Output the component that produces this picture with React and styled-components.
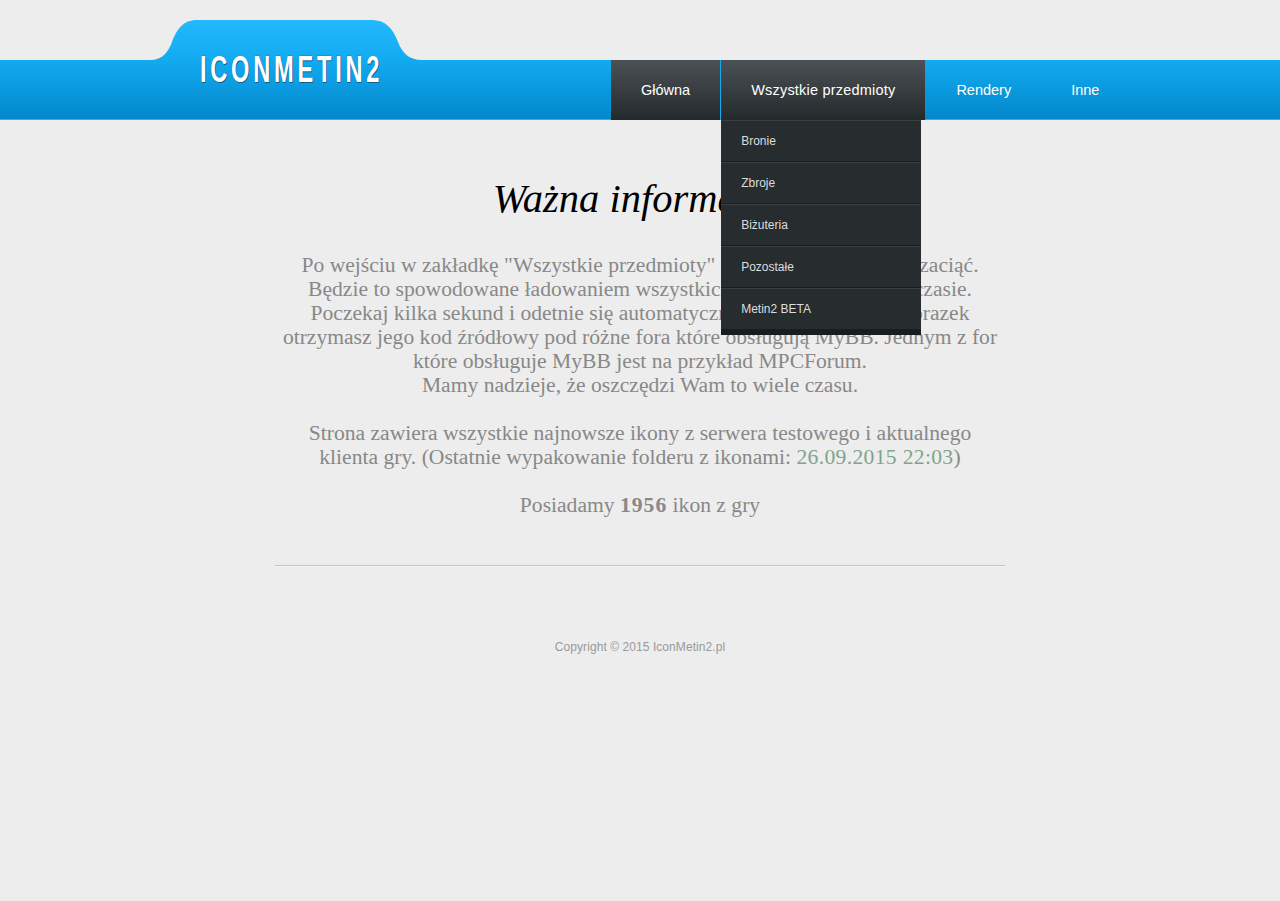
import React from "react";
import styled, { createGlobalStyle } from "styled-components";

const Global = createGlobalStyle`
  html, body { margin: 0; padding: 0; background: #ededed; }
  body { min-height: 901px; font-family: "Liberation Sans", Arial, sans-serif; }
`;

const Header = styled.header`
  position: relative;
  margin-top: 60px;
  height: 60px;
  box-sizing: border-box;
  border-bottom: 1px solid #2fb0ee;
  background: linear-gradient(#12aaf0, #0388cc);
`;

const LogoTab = styled.svg`
  position: absolute;
  left: 150px;
  top: -40px;
  width: 272px;
  height: 40px;
  display: block;
`;

const Logo = styled.a`
  position: absolute;
  left: 200px;
  top: -10px;
  font-family: "Liberation Sans", sans-serif;
  font-weight: 700;
  font-size: 37px;
  line-height: 40px;
  letter-spacing: 5.8px;
  color: #fff;
  white-space: nowrap;
  transform: scaleX(0.64);
  transform-origin: left center;
  -webkit-text-stroke: 0.5px #0a5f8c;
  paint-order: stroke fill;
  text-shadow: 1px 1px 0 #0a5f8c;
`;

const Nav = styled.nav`
  position: absolute;
  left: 611px;
  top: 0;
  display: flex;
  height: 60px;
`;

const NavItem = styled.div`
  position: relative;
  height: 60px;
  box-sizing: border-box;
  padding: 0 30px 0 ${(p) => p.$padLeft || 30}px;
  font-size: 14.5px;
  letter-spacing: ${(p) => p.$track || 0}px;
  line-height: 60px;
  color: #fff;
  white-space: nowrap;
  background: ${(p) => (p.$active ? "linear-gradient(#4b5154, #24292c)" : "transparent")};
  border-left: ${(p) => (p.$divider ? "1px solid #12aaf0" : "none")};
`;

const Dropdown = styled.ul`
  position: absolute;
  left: 0;
  top: 60px;
  width: 200px;
  margin: 0;
  padding: 0 0 5px;
  list-style: none;
  letter-spacing: 0;
  background: #1a1d1f;
  z-index: 2;
`;

const DropItem = styled.li`
  height: 42px;
  box-sizing: border-box;
  padding-left: 20px;
  font-size: 12px;
  line-height: 41px;
  color: #ddd;
  background: #272c2f;
  border-top: 1px solid #3b4043;
  border-bottom: 1px solid #1a1d1f;
`;

const Main = styled.main`
  width: 730px;
  margin: 0 auto;
  text-align: center;
  font-family: "Liberation Serif", Georgia, serif;
`;

const Title = styled.h1`
  margin: 56px 0 0;
  font-size: 40.5px;
  line-height: 46px;
  font-weight: 400;
  font-style: italic;
  color: #000;
`;

const Info = styled.p`
  margin: 0;
  padding-top: 31px;
  font-size: 21.6px;
  line-height: 24px;
  color: #888;
`;

const Accent = styled.span`
  color: #7fa48a;
  letter-spacing: 0.33px;
`;

const Count = styled.b`
  font-weight: 700;
  letter-spacing: 1px;
`;

const Rule = styled.hr`
  margin: 48px 0 0;
  border: 0;
  border-top: 1px solid #c4c4c4;
  border-bottom: 1px solid #f6f6f6;
`;

const Footer = styled.footer`
  margin-top: 72px;
  text-align: center;
  font-family: "Liberation Sans", Arial, sans-serif;
  font-size: 12px;
  letter-spacing: 0.07px;
  line-height: 16px;
  color: #999;
`;

const menu = ["Bronie", "Zbroje", "Biżuteria", "Pozostałe", "Metin2 BETA"];

export default function App() {
  return (
    <>
      <Global />
      <Header>
        <LogoTab viewBox="0 0 272 40">
          <defs>
            <linearGradient id="tab" x1="0" y1="0" x2="0" y2="1">
              <stop offset="0" stopColor="#23b9ff" />
              <stop offset="1" stopColor="#12aaf0" />
            </linearGradient>
          </defs>
          <path
            d="M0 40 C13 40 18 32 22 22 C27 9 33 0 47 0 L222 0 C236 0 243 9 248 22 C252 32 258 40 272 40 Z"
            fill="url(#tab)"
          />
        </LogoTab>
        <Logo>ICONMETIN2</Logo>
        <Nav>
          <NavItem $active>Główna</NavItem>
          <NavItem $active $divider $track={0.2}>
            Wszystkie przedmioty
            <Dropdown>
              {menu.map((m) => (
                <DropItem key={m}>{m}</DropItem>
              ))}
            </Dropdown>
          </NavItem>
          <NavItem $padLeft={31}>Rendery</NavItem>
          <NavItem>Inne</NavItem>
        </Nav>
      </Header>
      <Main>
        <Title>Ważna informacja</Title>
        <Info>
          Po wejściu w zakładkę "Wszystkie przedmioty" przeglądarka może się zaciąć.
          <br />
          Będzie to spowodowane ładowaniem wszystkich ikon, w tym samym czasie.
          <br />
          Poczekaj kilka sekund i odetnie się automatycznie. Po kliknięciu na obrazek
          <br />
          otrzymasz jego kod źródłowy pod różne fora które obsługują MyBB. Jednym z for
          <br />
          które obsługuje MyBB jest na przykład MPCForum.
          <br />
          Mamy nadzieje, że oszczędzi Wam to wiele czasu.
          <br />
          <br />
          Strona zawiera wszystkie najnowsze ikony z serwera testowego i aktualnego
          <br />
          klienta gry. (Ostatnie wypakowanie folderu z ikonami: <Accent>26.09.2015 22:03</Accent>)
          <br />
          <br />
          Posiadamy <Count>1956</Count> ikon z gry
        </Info>
        <Rule />
        <Footer>Copyright © 2015 IconMetin2.pl</Footer>
      </Main>
    </>
  );
}
